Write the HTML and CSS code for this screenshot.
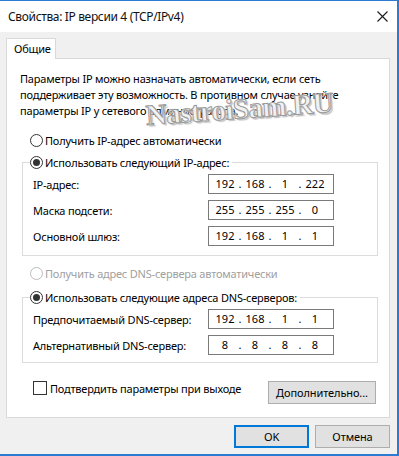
FILE: index.html
```html
<!DOCTYPE html>
<html lang="ru">
<head>
<meta charset="utf-8">
<title>Свойства: IP версии 4 (TCP/IPv4)</title>
<link rel="stylesheet" href="styles.css">
</head>
<body>
<div class="window">
  <div class="titlebar">
    <span class="title">Свойства: IP версии 4 (TCP/IPv4)</span>
    <svg class="close" width="11" height="11" viewBox="0 0 11 11"><path d="M0.5 0.5 L10.5 10.5 M10.5 0.5 L0.5 10.5" stroke="#1a1a1a" stroke-width="1.1" fill="none"/></svg>
  </div>
  <div class="client">
    <div class="tab">Общие</div>
    <div class="panel">
      <p class="desc">Параметры IP можно назначать автоматически, если сеть<br>поддерживает эту возможность. В противном случае узнайте<br>параметры IP у сетевого администратора.</p>
      <div class="radio-row first"><span class="radio"></span><span>Получить IP-адрес автоматически</span></div>
      <fieldset class="group">
        <legend class="legend"><span class="radio checked"></span><span>Использовать следующий IP-адрес:</span></legend>
        <div class="fields">
          <div class="field"><span>IP-адрес:</span><div class="ip"><span class="seg">192</span><span class="dot">.</span><span class="seg">168</span><span class="dot">.</span><span class="seg">1</span><span class="dot">.</span><span class="seg">222</span></div></div>
          <div class="field"><span>Маска подсети:</span><div class="ip"><span class="seg">255</span><span class="dot">.</span><span class="seg">255</span><span class="dot">.</span><span class="seg">255</span><span class="dot">.</span><span class="seg">0</span></div></div>
          <div class="field"><span>Основной шлюз:</span><div class="ip"><span class="seg">192</span><span class="dot">.</span><span class="seg">168</span><span class="dot">.</span><span class="seg">1</span><span class="dot">.</span><span class="seg">1</span></div></div>
        </div>
      </fieldset>
      <div class="radio-row disabled second"><span class="radio"></span><span>Получить адрес DNS-сервера автоматически</span></div>
      <fieldset class="group group-dns">
        <legend class="legend"><span class="radio checked"></span><span>Использовать следующие адреса DNS-серверов:</span></legend>
        <div class="fields">
          <div class="field"><span>Предпочитаемый DNS-сервер:</span><div class="ip"><span class="seg">192</span><span class="dot">.</span><span class="seg">168</span><span class="dot">.</span><span class="seg">1</span><span class="dot">.</span><span class="seg">1</span></div></div>
          <div class="field"><span>Альтернативный DNS-сервер:</span><div class="ip"><span class="seg">8</span><span class="dot">.</span><span class="seg">8</span><span class="dot">.</span><span class="seg">8</span><span class="dot">.</span><span class="seg">8</span></div></div>
        </div>
      </fieldset>
      <div class="bottom-row">
        <div class="check-row"><span class="checkbox"></span><span>Подтвердить параметры при выходе</span></div>
        <button class="btn btn-adv">Дополнительно...</button>
      </div>
    </div>
    <div class="footer">
      <button class="btn btn-ok">OK</button>
      <button class="btn">Отмена</button>
    </div>
  </div>
  <div class="watermark">NastroiSam.RU</div>
</div>
</body>
</html>
```

FILE: styles.css
```css
html, body {
  margin: 0;
  padding: 0;
  background: #ffffff;
}

body {
  font-family: "Noto Sans", "Open Sans", sans-serif;
  font-size: 11px;
  letter-spacing: -0.2px;
  color: #000000;
  white-space: nowrap;
}

.window {
  position: relative;
  width: 399px;
  height: 456px;
  box-sizing: border-box;
  border-top: 1px solid #2b7bd3;
  border-right: 2px solid #2b7bd3;
  border-bottom: 2px solid #2b7bd3;
  background: #f0f0f0;
  display: flex;
  flex-direction: column;
  overflow: hidden;
}

.titlebar {
  height: 31px;
  flex: none;
  background: #ffffff;
  display: flex;
  align-items: center;
  justify-content: space-between;
  padding: 0 9px 0 8px;
}

.title {
  font-size: 12px;
  letter-spacing: -0.35px;
  line-height: 16px;
  color: #111111;
}

.close {
  display: block;
}

.client {
  flex: 1;
  padding: 6px 0 0 6px;
  display: flex;
  flex-direction: column;
}

.tab {
  position: relative;
  z-index: 1;
  width: 50px;
  height: 21px;
  box-sizing: border-box;
  border: 1px solid #d9d9d9;
  border-bottom: none;
  background: #ffffff;
  padding-left: 7px;
  line-height: 20px;
  margin-bottom: -1px;
}

.panel {
  width: 384px;
  height: 360px;
  box-sizing: border-box;
  border: 1px solid #d9d9d9;
  background: #ffffff;
  padding: 12px 11px 0 13px;
  display: flex;
  flex-direction: column;
}

.desc {
  margin: 0;
  line-height: 16px;
}

.radio-row {
  display: flex;
  align-items: center;
  gap: 2px;
  height: 16px;
  margin-left: 10px;
}

.radio-row.first {
  margin-top: 13px;
}

.radio-row.second {
  margin-top: 9px;
}

.radio-row.disabled {
  color: #a0a0a0;
}

.radio {
  width: 13px;
  height: 13px;
  box-sizing: border-box;
  border: 1px solid #333333;
  border-radius: 50%;
  background: #ffffff;
  display: flex;
  align-items: center;
  justify-content: center;
  flex: none;
}

.radio.checked::after {
  content: "";
  width: 7px;
  height: 7px;
  border-radius: 50%;
  background: #333333;
}

.disabled .radio {
  border-color: #bcbcbc;
}

.group {
  margin: 6px 0 0 2px;
  padding: 4px 43px 9px 7px;
  border: 1px solid #dcdcdc;
  min-width: 0;
}

.group-dns {
  margin-top: 8px;
  padding-bottom: 7px;
}

.legend {
  display: flex;
  align-items: center;
  gap: 2px;
  height: 16px;
  padding: 0 3px 0 0;
}

.fields {
  display: flex;
  flex-direction: column;
  gap: 6px;
}

.field {
  display: flex;
  align-items: center;
  justify-content: space-between;
  height: 20px;
  padding-left: 3px;
}

.ip {
  width: 126px;
  height: 20px;
  box-sizing: border-box;
  border: 1px solid #7a7a7a;
  background: #ffffff;
  display: flex;
  align-items: center;
  padding-left: 3px;
  line-height: 18px;
  letter-spacing: 0;
}

.seg {
  width: 26px;
  text-align: center;
}

.dot {
  width: 4px;
  text-align: center;
}

.bottom-row {
  display: flex;
  align-items: flex-start;
  margin-top: 18px;
  margin-right: 2px;
}

.check-row {
  display: flex;
  align-items: center;
  gap: 3px;
  margin-left: 13px;
  height: 14px;
}

.checkbox {
  width: 14px;
  height: 14px;
  box-sizing: border-box;
  border: 1px solid #333333;
  background: #ffffff;
  flex: none;
}

.btn {
  font-family: inherit;
  font-size: 11px;
  letter-spacing: -0.1px;
  color: #000000;
  height: 23px;
  width: 75px;
  box-sizing: border-box;
  border: 1px solid #adadad;
  background: #e1e1e1;
  padding: 0;
  margin: 0;
}

.btn-adv {
  margin-left: auto;
  width: 108px;
}

.btn-ok {
  border: 2px solid #0078d7;
}

.footer {
  display: flex;
  justify-content: flex-end;
  gap: 6px;
  margin-top: 7px;
  padding-right: 7px;
}

.watermark {
  position: absolute;
  left: 147px;
  top: 98px;
  font-family: "Liberation Serif", "DejaVu Serif", serif;
  font-weight: bold;
  font-size: 29px;
  letter-spacing: -0.6px;
  color: #f2f2f2;
  -webkit-text-stroke: 1px #9a9a9a;
  text-shadow: 2px 2px 1px #c4c4c4;
  transform: rotate(-4deg);
  transform-origin: left bottom;
  pointer-events: none;
  white-space: nowrap;
}
```
